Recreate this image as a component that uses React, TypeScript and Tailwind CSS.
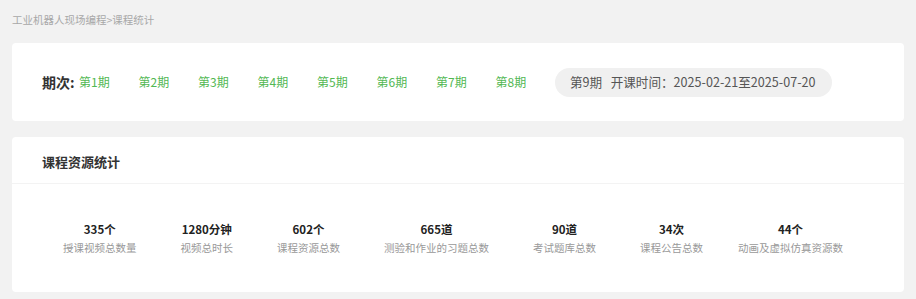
import React from "react";

const periods = ["第1期", "第2期", "第3期", "第4期", "第5期", "第6期", "第7期", "第8期"];

const stats = [
  { n: "335个", l: "授课视频总数量" },
  { n: "1280分钟", l: "视频总时长" },
  { n: "602个", l: "课程资源总数" },
  { n: "665道", l: "测验和作业的习题总数" },
  { n: "90道", l: "考试题库总数" },
  { n: "34次", l: "课程公告总数" },
  { n: "44个", l: "动画及虚拟仿真资源数" },
];

export default function App() {
  return (
    <div
      className="w-[916px] h-[299px] bg-[#f2f2f2] px-[12px] overflow-hidden"
      style={{ fontFamily: '"Noto Sans CJK SC", "Noto Sans", sans-serif' }}
    >
      <div className="h-[43px] pt-[13px] text-[10.5px] leading-[14px] text-[#a8a8a8]">
        工业机器人现场编程&gt;课程统计
      </div>
      <div className="h-[78px] bg-white rounded-[4px] flex items-center pl-[30px]">
        <span className="text-[14px] font-bold text-[#333] w-[37px] leading-[20px]">期次:</span>
        {periods.map((p) => (
          <span key={p} className="w-[59.5px] text-[12px] text-[#52b852] leading-[18px] shrink-0">
            {p}
          </span>
        ))}
        <div className="h-[29px] w-[277px] pl-[15px] rounded-full bg-[#f0f0f0] flex items-center text-[12.6px] text-[#555] whitespace-nowrap">
          第9期&nbsp;&nbsp;&nbsp;开课时间：2025-02-21至2025-07-20
        </div>
      </div>
      <div className="mt-[16px] h-[155px] bg-white rounded-[4px]">
        <div className="h-[47px] border-b border-[#f3f3f3] pl-[30px] pt-[15px] text-[13px] font-bold text-[#333] leading-[20px]">
          课程资源统计
        </div>
        <div className="flex pl-[51px] pt-[36px]">
          {stats.map((s, i) => (
            <div
              key={s.l}
              className={
                "flex flex-col items-center " +
                (i === 0 ? "" : i === stats.length - 1 ? "ml-[35px]" : "ml-[44px]")
              }
            >
              <div className="text-[11.5px] font-bold text-[#222] leading-[18px]">{s.n}</div>
              <div className="text-[10.5px] text-[#999] leading-[20px] whitespace-nowrap">{s.l}</div>
            </div>
          ))}
        </div>
      </div>
    </div>
  );
}
